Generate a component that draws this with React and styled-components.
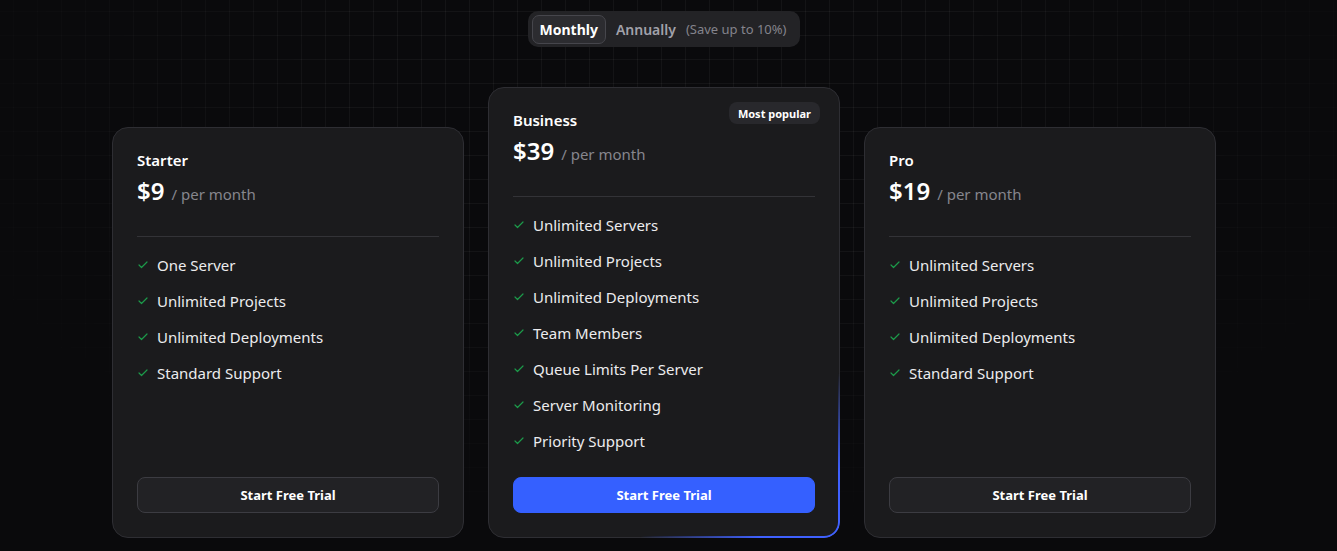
import React from "react";
import styled, { createGlobalStyle } from "styled-components";

const Global = createGlobalStyle`
  html, body { margin: 0; padding: 0; background: #0a0a0c; }
  body { font-family: "Noto Sans", "Open Sans", sans-serif; color: #fafafa; }
  * { box-sizing: border-box; }
`;

const Page = styled.div`
  position: relative;
  min-height: 551px;
  padding: 11px 9px 0 0;
  overflow: hidden;
  background: #0a0a0c;
`;

const Grid = styled.div`
  position: absolute;
  inset: 0;
  background-image:
    linear-gradient(to right, rgba(255,255,255,0.045) 1px, transparent 1px),
    linear-gradient(to bottom, rgba(255,255,255,0.045) 1px, transparent 1px);
  background-size: 24px 24px;
  background-position: 13px 11px;
  -webkit-mask-image: radial-gradient(ellipse 60% 80% at 50% 20%, #000 40%, transparent 100%);
  mask-image: radial-gradient(ellipse 60% 80% at 50% 20%, #000 40%, transparent 100%);
  pointer-events: none;
`;

const Content = styled.div`
  position: relative;
  display: flex;
  flex-direction: column;
  align-items: center;
`;

const Toggle = styled.div`
  display: flex;
  align-items: center;
  height: 36px;
  padding: 4px;
  border-radius: 10px;
  background: #232326;
`;

const ToggleButton = styled.button`
  height: 29px;
  padding: 0 ${(p) => (p.$active ? "7px" : "9px")};
  border-radius: 7px;
  border: 1px solid ${(p) => (p.$active ? "#46464c" : "transparent")};
  background: ${(p) => (p.$active ? "#2c2c30" : "transparent")};
  color: ${(p) => (p.$active ? "#ffffff" : "#a1a1aa")};
  font-family: inherit;
  font-size: 14px;
  font-weight: ${(p) => (p.$active ? 700 : 600)};
  display: flex;
  align-items: center;
  gap: 10px;
  cursor: pointer;
`;

const Save = styled.span`
  font-size: 13px;
  font-weight: 400;
  color: #84848c;
`;

const Row = styled.div`
  display: flex;
  align-items: flex-end;
  gap: 24px;
  margin-top: 40px;
`;

const Card = styled.div`
  position: relative;
  width: 352px;
  height: ${(p) => (p.$featured ? "451px" : "411px")};
  padding: 24px;
  border-radius: 16px;
  border: 1px solid #2e2e33;
  background: #1b1b1d;
  display: flex;
  flex-direction: column;
`;

const Beam = styled.span`
  position: absolute;
  inset: -1px;
  border-radius: 16px;
  border: 2px solid #3f61ff;
  -webkit-mask-image: radial-gradient(200px 165px at 100% 100%, #000 0%, #000 40%, transparent 100%);
  mask-image: radial-gradient(200px 165px at 100% 100%, #000 0%, #000 40%, transparent 100%);
  pointer-events: none;
`;

const Badge = styled.span`
  position: absolute;
  top: 14px;
  right: 19px;
  height: 22px;
  padding: 0 9px;
  border-radius: 8px;
  background: #28282c;
  color: #ffffff;
  font-size: 11px;
  font-weight: 700;
  display: flex;
  align-items: center;
`;

const Title = styled.h3`
  margin: 0;
  font-size: 15px;
  line-height: 17px;
  font-weight: 600;
  color: #ffffff;
`;

const Price = styled.div`
  margin-top: 6px;
  line-height: 32px;
  display: flex;
  align-items: baseline;
  gap: 7px;
`;

const Amount = styled.span`
  font-size: 24px;
  font-weight: 600;
  color: #ffffff;
`;

const Period = styled.span`
  font-size: 15px;
  color: #86868d;
`;

const Divider = styled.hr`
  margin: 26px 0 0;
  border: 0;
  height: 1px;
  background: #333337;
`;

const Features = styled.ul`
  list-style: none;
  margin: 18px 0 0;
  padding: 0;
  display: flex;
  flex-direction: column;
  gap: 16px;
`;

const Feature = styled.li`
  display: flex;
  align-items: center;
  gap: 8px;
  font-size: 15px;
  line-height: 20px;
  color: #ececee;
`;

const CheckIcon = styled.svg`
  width: 12px;
  height: 12px;
  flex: none;
  color: #1c9a4a;
`;

const CTA = styled.button`
  margin-top: auto;
  height: 36px;
  width: 100%;
  border-radius: 8px;
  border: 1px solid ${(p) => (p.$primary ? "#3560ff" : "#3c3c42")};
  background: ${(p) => (p.$primary ? "#3560ff" : "#222225")};
  color: #ffffff;
  font-family: inherit;
  font-size: 13px;
  font-weight: 700;
  cursor: pointer;
`;

const Check = () => (
  <CheckIcon viewBox="0 0 24 24" fill="none" stroke="currentColor" strokeWidth="2.4" strokeLinecap="round" strokeLinejoin="round">
    <path d="M20 6 9 17l-5-5" />
  </CheckIcon>
);

const plans = [
  {
    name: "Starter",
    price: "$9",
    features: ["One Server", "Unlimited Projects", "Unlimited Deployments", "Standard Support"],
  },
  {
    name: "Business",
    price: "$39",
    featured: true,
    features: [
      "Unlimited Servers",
      "Unlimited Projects",
      "Unlimited Deployments",
      "Team Members",
      "Queue Limits Per Server",
      "Server Monitoring",
      "Priority Support",
    ],
  },
  {
    name: "Pro",
    price: "$19",
    features: ["Unlimited Servers", "Unlimited Projects", "Unlimited Deployments", "Standard Support"],
  },
];

export default function App() {
  return (
    <Page>
      <Global />
      <Grid />
      <Content>
        <Toggle>
          <ToggleButton $active>Monthly</ToggleButton>
          <ToggleButton>
            Annually <Save>(Save up to 10%)</Save>
          </ToggleButton>
        </Toggle>
        <Row>
          {plans.map((p) => (
            <Card key={p.name} $featured={p.featured}>
              {p.featured && <Beam />}
              {p.featured && <Badge>Most popular</Badge>}
              <Title>{p.name}</Title>
              <Price>
                <Amount>{p.price}</Amount>
                <Period>/ per month</Period>
              </Price>
              <Divider />
              <Features>
                {p.features.map((f) => (
                  <Feature key={f}>
                    <Check />
                    {f}
                  </Feature>
                ))}
              </Features>
              <CTA $primary={p.featured}>Start Free Trial</CTA>
            </Card>
          ))}
        </Row>
      </Content>
    </Page>
  );
}
